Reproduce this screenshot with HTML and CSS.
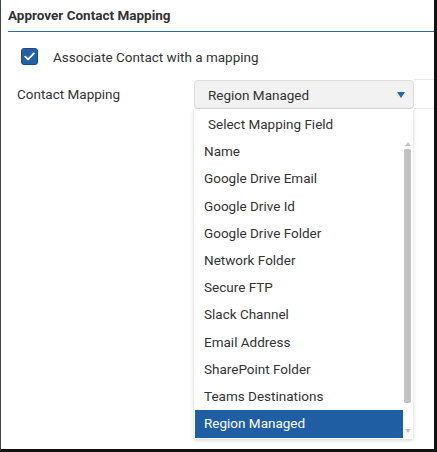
FILE: index.html
```html
<!DOCTYPE html>
<html>
<head>
<meta charset="utf-8">
<link rel="stylesheet" href="styles.css">
</head>
<body>
<div class="panel">
  <div class="title">Approver Contact Mapping</div>
  <div class="content">
    <div class="check-row">
      <span class="checkbox">
        <svg width="11" height="9" viewBox="0 0 11 9"><path d="M1.2 4.6 L4.1 7.4 L9.8 1.4" fill="none" stroke="#fff" stroke-width="1.8" stroke-linecap="round" stroke-linejoin="round"/></svg>
      </span>
      <span class="check-label">Associate Contact with a mapping</span>
    </div>
    <div class="field-row">
      <span class="field-label">Contact Mapping</span>
      <div class="select-wrap">
        <div class="select">
          <span>Region Managed</span>
          <span class="arrow"></span>
        </div>
        <div class="menu">
          <div class="menu-list">
            <div class="item placeholder">Select Mapping Field</div>
            <div class="item">Name</div>
            <div class="item">Google Drive Email</div>
            <div class="item">Google Drive Id</div>
            <div class="item">Google Drive Folder</div>
            <div class="item">Network Folder</div>
            <div class="item">Secure FTP</div>
            <div class="item">Slack Channel</div>
            <div class="item">Email Address</div>
            <div class="item">SharePoint Folder</div>
            <div class="item">Teams Destinations</div>
            <div class="item selected">Region Managed</div>
          </div>
          <div class="scrollbar">
            <span class="sb-up"></span>
            <span class="sb-thumb"></span>
            <span class="sb-down"></span>
          </div>
        </div>
      </div>
      <div class="row-rest"></div>
    </div>
  </div>
</div>
</body>
</html>
```
FILE: styles.css
```css
* { box-sizing: border-box; }
html, body { margin: 0; padding: 0; background: #fff; }
body {
  font-family: Roboto, "Liberation Sans", Arial, sans-serif;
  font-size: 13.5px;
  color: #333;
}
.panel {
  width: 437px;
  height: 452px;
  border-left: 1px solid #444;
  border-right: 3px solid #111;
  border-bottom: 3px solid #111;
  overflow: hidden;
}
.title {
  margin-left: 7px;
  height: 32px;
  line-height: 31px;
  font-weight: bold;
  font-size: 13.5px;
  color: #333;
  border-bottom: 1px solid #2f6aab;
}
.content {
  padding-top: 16px;
}
.check-row {
  display: flex;
  align-items: center;
  padding-left: 20px;
  height: 17px;
}
.checkbox {
  width: 17px;
  height: 17px;
  border-radius: 3px;
  background: #2460a4;
  border: 1px solid #174a86;
  display: flex;
  align-items: center;
  justify-content: center;
}
.check-label {
  margin-left: 15px;
  color: #333;
}
.field-row {
  display: flex;
  align-items: flex-start;
  margin-top: 15px;
}
.field-label {
  width: 193px;
  padding-left: 16px;
  line-height: 29px;
}
.select-wrap {
  position: relative;
  width: 220px;
}
.select {
  height: 29px;
  background: #f2f2f2;
  border: 1px solid #dcdcdc;
  border-radius: 4px;
  display: flex;
  align-items: center;
  justify-content: space-between;
  padding: 0 8px 0 13px;
  color: #333;
}
.arrow {
  width: 0;
  height: 0;
  border-left: 4.5px solid transparent;
  border-right: 4.5px solid transparent;
  border-top: 6px solid #2466b0;
  margin-top: 1px;
}
.row-rest {
  flex: 1;
  height: 30px;
  border-top: 1px solid #ececec;
  border-bottom: 1px solid #ececec;
  margin-top: -1px;
}
.menu {
  position: absolute;
  top: 29px;
  left: 0;
  width: 219px;
  height: 330px;
  background: #fff;
  box-shadow: 0 1px 4px rgba(0,0,0,0.18);
  display: flex;
  padding: 2px 1px 0 1px;
}
.menu-list {
  flex: 1;
}
.item {
  height: 27.2px;
  line-height: 27px;
  padding-left: 9px;
  color: #333;
  white-space: nowrap;
}
.item.placeholder {
  padding-left: 13px;
}
.item.selected {
  background: #1f5ea3;
  color: #fff;
  height: 28px;
}
.scrollbar {
  width: 9px;
  display: flex;
  flex-direction: column;
  align-items: center;
  padding-top: 31px;
  margin-right: 0;
}
.sb-up {
  width: 0;
  height: 0;
  border-left: 3.5px solid transparent;
  border-right: 3.5px solid transparent;
  border-bottom: 4px solid #c4c4c4;
}
.sb-thumb {
  width: 7px;
  height: 254px;
  margin-top: 3px;
  background: #c1c1c1;
  border-radius: 2px;
}
.sb-down {
  width: 0;
  height: 0;
  margin-top: 26px;
  border-left: 3.5px solid transparent;
  border-right: 3.5px solid transparent;
  border-top: 4px solid #c4c4c4;
}
```
